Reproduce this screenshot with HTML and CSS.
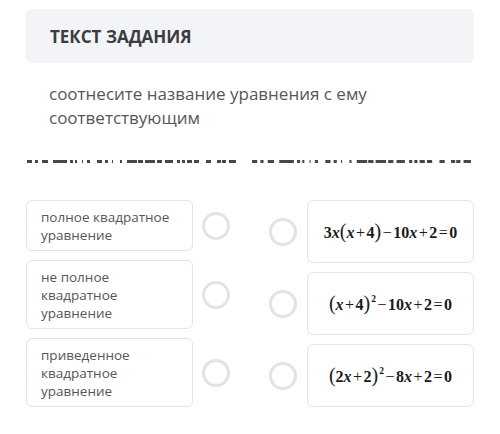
FILE: index.html
```html
<!DOCTYPE html>
<html lang="ru">
<head>
<meta charset="utf-8">
<title>Текст задания</title>
<link rel="stylesheet" href="styles.css">
</head>
<body>
<div class="page">
  <div class="header">ТЕКСТ ЗАДАНИЯ</div>
  <p class="prompt">соотнесите название уравнения с ему соответствующим</p>
  <div class="dashes">
    <svg class="dash-left" width="211" height="3" viewBox="0 0 211 3" preserveAspectRatio="none"><line x1="0" y1="1.5" x2="211" y2="1.5" stroke="#45474c" stroke-width="3" stroke-dasharray="5 3 3 4 6 5 14 3 3 2 2 5 1 4 3 7 5 3 3 4 1 7 2 5 10 1 5 2 10 2 5 3 8 4 3 2 3 2 5 2 5 7 5 6 4 1 4 3 7 100"/></svg>
    <svg class="dash-right" width="221" height="3" viewBox="0 0 211 3" preserveAspectRatio="none"><line x1="0" y1="1.5" x2="211" y2="1.5" stroke="#45474c" stroke-width="3" stroke-dasharray="5 3 3 4 6 5 14 3 3 2 2 5 1 4 3 7 5 3 3 4 1 7 2 5 10 1 5 2 10 2 5 3 8 4 3 2 3 2 5 2 5 7 5 6 4 1 4 3 7 100"/></svg>
  </div>
  <div class="match">
    <div class="col col-left">
      <div class="row">
        <div class="card text-card">полное квадратное уравнение</div>
        <span class="radio"></span>
      </div>
      <div class="row">
        <div class="card text-card">не полное квадратное уравнение</div>
        <span class="radio"></span>
      </div>
      <div class="row">
        <div class="card text-card">приведенное квадратное уравнение</div>
        <span class="radio"></span>
      </div>
    </div>
    <div class="col col-right">
      <div class="row">
        <span class="radio"></span>
        <div class="card eq-card"><span class="eq">3<i>x</i><span class="par">(</span><i>x</i><span class="op">+</span>4<span class="par">)</span><span class="op">−</span>10<i>x</i><span class="op">+</span>2<span class="op">=</span>0</span></div>
      </div>
      <div class="row">
        <span class="radio"></span>
        <div class="card eq-card"><span class="eq"><span class="par">(</span><i>x</i><span class="op">+</span>4<span class="par">)</span><sup>2</sup><span class="op">−</span>10<i>x</i><span class="op">+</span>2<span class="op">=</span>0</span></div>
      </div>
      <div class="row">
        <span class="radio"></span>
        <div class="card eq-card"><span class="eq"><span class="par">(</span>2<i>x</i><span class="op">+</span>2<span class="par">)</span><sup>2</sup><span class="op">−</span>8<i>x</i><span class="op">+</span>2<span class="op">=</span>0</span></div>
      </div>
    </div>
  </div>
</div>
</body>
</html>
```
FILE: styles.css
```css
* { box-sizing: border-box; }
html, body { margin: 0; padding: 0; background: #fff; }
body { font-family: "Open Sans", "Noto Sans", sans-serif; }

.page { padding: 9px 26px 0 26px; width: 500px; }

.header {
  height: 54px;
  background: #f3f4f7;
  border-radius: 6px;
  display: flex;
  align-items: center;
  padding-left: 24px;
  font-size: 17px;
  font-weight: 700;
  color: #3a3c42;
}

.prompt {
  margin: 19px 0 0 0;
  padding: 0 40px 0 23px;
  font-size: 17px;
  line-height: 23.5px;
  color: #555659;
}

.dashes {
  margin-top: 31px;
  height: 3px;
  display: flex;
  justify-content: space-between;
  padding-left: 1px;
  padding-right: 1px;
}
.dashes svg { display: block; }

.match {
  margin-top: 37px;
  display: flex;
  justify-content: space-between;
}
.col { display: flex; flex-direction: column; gap: 9px; }
.row { display: flex; align-items: center; gap: 9px; }
.col-right .row { gap: 10px; }

.card {
  width: 167px;
  border: 1px solid #e4e4e6;
  border-radius: 6px;
  background: #fff;
}
.text-card {
  padding: 7px 12px 6px 14px;
  font-size: 13.5px;
  line-height: 18px;
  color: #55565a;
}
.eq-card {
  height: 63px;
  display: flex;
  align-items: center;
  justify-content: center;
}

.radio {
  width: 28px;
  height: 28px;
  border-radius: 50%;
  border: 3px solid #e3e3e5;
  flex: none;
}

.eq {
  font-family: "Liberation Serif", "Times New Roman", serif;
  font-weight: 700;
  font-size: 16px;
  color: #1a1a1a;
  white-space: nowrap;
  display: inline-flex;
  align-items: baseline;
}
.eq i { font-style: italic; }
.eq .op { padding: 0 1.5px; font-weight: 400; }
.eq .par { font-size: 20px; font-weight: 400; line-height: 1; }
.eq sup { font-size: 9.5px; position: relative; top: -8px; vertical-align: baseline; margin-left: 1px; }
```
